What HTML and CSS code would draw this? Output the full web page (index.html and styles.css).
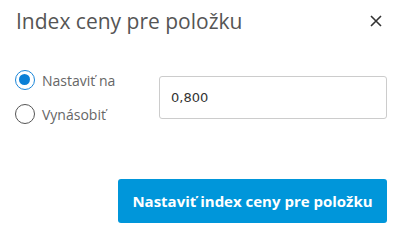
FILE: index.html
```html
<!DOCTYPE html>
<html>
<head>
<meta charset="utf-8">
<link rel="stylesheet" href="styles.css">
</head>
<body>
<div class="dialog">
  <div class="header">
    <div class="title">Index ceny pre položku</div>
    <svg class="close" width="12" height="12" viewBox="0 0 12 12"><path d="M1 1L11 11M11 1L1 11" stroke="#333" stroke-width="1.6" fill="none"/></svg>
  </div>
  <div class="body">
    <div class="radios">
      <label class="radio"><span class="circle checked"></span><span class="label">Nastaviť na</span></label>
      <label class="radio"><span class="circle"></span><span class="label">Vynásobiť</span></label>
    </div>
    <div class="field"><div class="input">0,800</div></div>
  </div>
  <div class="footer">
    <button class="btn">Nastaviť index ceny pre položku</button>
  </div>
</div>
</body>
</html>
```
FILE: styles.css
```css
html, body { margin: 0; padding: 0; background: #fff; }
body { font-family: "Open Sans", "Noto Sans", sans-serif; }
.dialog { padding: 0 14px 0 15px; }
.header { display: flex; justify-content: space-between; align-items: center; height: 42px; }
.title { font-size: 21px; font-weight: 500; color: #555; padding-left: 1px; }
.close { margin-right: 5px; }
.body { display: flex; align-items: center; margin-top: 28px; }
.radios { width: 144px; display: flex; flex-direction: column; gap: 14px; }
.radio { display: flex; align-items: center; gap: 7px; height: 20px; }
.circle { width: 20px; height: 20px; box-sizing: border-box; border: 1.5px solid #555; border-radius: 50%; position: relative; }
.circle.checked { border-color: #1a86d9; }
.circle.checked::after { content: ""; position: absolute; left: 3px; top: 3px; width: 11px; height: 11px; border-radius: 50%; background: #0a7fd6; }
.label { font-size: 14px; color: #666; }
.field { flex: 1; }
.input { height: 43px; box-sizing: border-box; border: 1px solid #ccc; border-radius: 3px; padding-left: 11px; display: flex; align-items: center; font-family: "DejaVu Sans", sans-serif; font-size: 13px; color: #333; }
.footer { display: flex; justify-content: flex-end; margin-top: 55px; }
.btn { width: 269px; height: 44px; border: 0; border-radius: 3px; background: #0096da; color: #fff; font-family: "Open Sans", sans-serif; font-weight: 700; font-size: 15px; padding: 0; }
```
